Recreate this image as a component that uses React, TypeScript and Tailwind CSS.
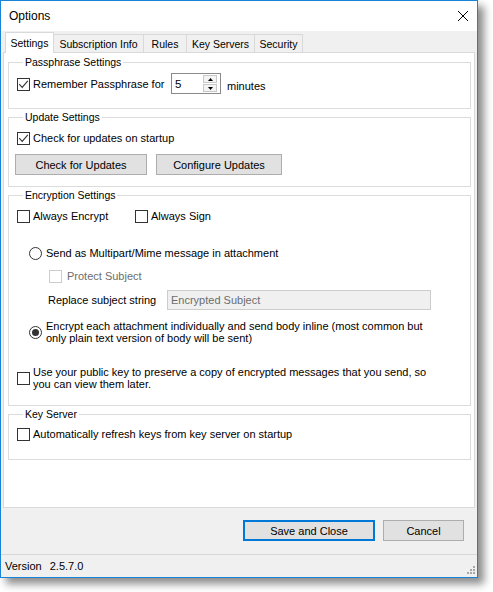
import React from "react";

function Check({ checked = false, disabled = false }: { checked?: boolean; disabled?: boolean }) {
  return (
    <span
      className={
        disabled
          ? "w-[13px] h-[13px] shrink-0 border border-[#cccccc] bg-white flex items-center justify-center"
          : "w-[13px] h-[13px] shrink-0 border border-[#333333] bg-white flex items-center justify-center"
      }
    >
      {checked && (
        <svg width="11" height="11" viewBox="0 0 11 11">
          <path d="M1.2 5.2 L4.2 8.4 L9.8 1.8" fill="none" stroke="#333333" strokeWidth="1.1" />
        </svg>
      )}
    </span>
  );
}

function Radio({ checked = false }: { checked?: boolean }) {
  return (
    <span className="w-[13px] h-[13px] shrink-0 rounded-full border border-[#333333] bg-white flex items-center justify-center">
      {checked && <span className="w-[7px] h-[7px] rounded-full bg-[#333333]" />}
    </span>
  );
}

function Group({ title, children, className }: { title: string; children: React.ReactNode; className?: string }) {
  return (
    <fieldset className={"border border-[#dcdcdc] pl-[8px] " + (className ?? "")}>
      <legend className="ml-[6px] px-[2px] text-[10.5px] leading-[14px]">{title}</legend>
      {children}
    </fieldset>
  );
}

export default function App() {
  return (
    <div className="w-[493px] h-[592px] bg-white font-['Liberation_Sans',Arial,sans-serif] text-[11px] leading-[14px] text-black">
      <div className="w-[478px] h-[578px] border border-[#1883d7] bg-[#f0f0f0] flex flex-col shadow-[6px_6px_8px_rgba(0,0,0,0.45)]">
        {/* Title bar */}
        <div className="h-[30px] shrink-0 bg-white flex items-center justify-between pl-[8px] pr-[9px]">
          <span className="text-[12px] leading-[16px]">Options</span>
          <svg width="10" height="10" viewBox="0 0 10 10">
            <path d="M0 0 L10 10 M10 0 L0 10" stroke="#000" strokeWidth="1" />
          </svg>
        </div>

        {/* Tab control */}
        <div className="px-[2px] shrink-0">
          <div className="h-[21px] flex items-end pl-[2px] text-[10.5px]">
            <div className="relative z-10 -mb-px w-[49px] h-[21px] bg-white border-l border-t border-r border-[#d9d9d9] flex items-center justify-center pb-[1px]">
              Settings
            </div>
            <div className="w-[90px] h-[18px] border-t border-r border-[#d9d9d9] flex items-center justify-center">
              Subscription Info
            </div>
            <div className="w-[43px] h-[18px] border-t border-r border-[#d9d9d9] flex items-center justify-center">
              Rules
            </div>
            <div className="w-[68px] h-[18px] border-t border-r border-[#d9d9d9] flex items-center justify-center">
              Key Servers
            </div>
            <div className="w-[48px] h-[18px] border-t border-r border-[#d9d9d9] flex items-center justify-center">
              Security
            </div>
          </div>

          <div className="h-[456px] border border-[#d9d9d9] bg-white pt-[2px] pl-[4px] pr-[3px]">
            {/* Passphrase Settings */}
            <Group title="Passphrase Settings" className="pb-[14px]">
              <div className="mt-[5px] h-[20px] flex items-center">
                <Check checked />
                <span className="ml-[3px] w-[138px]">Remember Passphrase for</span>
                <div className="w-[50px] h-[21px] -mt-[1px] border border-[#8a8a8a] bg-white flex items-center">
                  <span className="flex-1 pl-[3px] text-[11.5px]">5</span>
                  <div className="w-[14px] h-[17px] flex flex-col gap-px mr-[3px]">
                    <div className="flex-1 border border-[#c8c8c8] bg-[#f4f4f4] flex items-center justify-center">
                      <svg width="5" height="3" viewBox="0 0 5 3">
                        <path d="M2.5 0 L5 3 L0 3 Z" fill="#000" />
                      </svg>
                    </div>
                    <div className="flex-1 border border-[#c8c8c8] bg-[#f4f4f4] flex items-center justify-center">
                      <svg width="5" height="3" viewBox="0 0 5 3">
                        <path d="M0 0 L5 0 L2.5 3 Z" fill="#000" />
                      </svg>
                    </div>
                  </div>
                </div>
                <span className="ml-[6px] pt-[4px]">minutes</span>
              </div>
            </Group>

            {/* Update Settings */}
            <Group title="Update Settings" className="mt-[1px] pb-[11px]">
              <div className="mt-[6px] h-[16px] flex items-center">
                <Check checked />
                <span className="ml-[3px]">Check for updates on startup</span>
              </div>
              <div className="mt-[8px] -ml-[2px] flex gap-[9px]">
                <button className="w-[132px] h-[21px] border border-[#adadad] bg-[#e1e1e1] text-[11px] leading-[14px]">
                  Check for Updates
                </button>
                <button className="w-[126px] h-[21px] border border-[#adadad] bg-[#e1e1e1] text-[11px] leading-[14px]">
                  Configure Updates
                </button>
              </div>
            </Group>

            {/* Encryption Settings */}
            <Group title="Encryption Settings" className="mt-[1px] pb-[15px]">
              <div className="mt-[6px] h-[16px] flex items-center">
                <div className="w-[118px] flex items-center">
                  <Check />
                  <span className="ml-[3px]">Always Encrypt</span>
                </div>
                <Check />
                <span className="ml-[3px]">Always Sign</span>
              </div>

              <div className="mt-[21px] h-[16px] ml-[12px] flex items-center">
                <Radio />
                <span className="ml-[4px]">Send as Multipart/Mime message in attachment</span>
              </div>

              <div className="mt-[7px] h-[16px] ml-[32px] flex items-center text-[#6d6d6d]">
                <Check disabled />
                <span className="ml-[5px]">Protect Subject</span>
              </div>

              <div className="mt-[6px] h-[20px] ml-[31px] flex items-center">
                <span className="w-[119px]">Replace subject string</span>
                <div className="w-[264px] h-[20px] border border-[#cccccc] bg-[#f0f0f0] text-[#6d6d6d] pl-[3px] flex items-center">
                  Encrypted Subject
                </div>
              </div>

              <div className="mt-[10px] h-[24px] ml-[12px] flex items-center">
                <Radio checked />
                <span className="ml-[4px] leading-[12px]">
                  Encrypt each attachment individually and send body inline (most common but
                  <br />
                  only plain text version of body will be sent)
                </span>
              </div>

              <div className="mt-[22px] h-[24px] flex items-center">
                <Check />
                <span className="ml-[3px] leading-[12px]">
                  Use your public key to preserve a copy of encrypted messages that you send, so
                  <br />
                  you can view them later.
                </span>
              </div>
            </Group>

            {/* Key Server */}
            <Group title="Key Server" className="mt-[1px] pb-[17px]">
              <div className="mt-[5px] h-[16px] flex items-center">
                <Check />
                <span className="ml-[3px]">Automatically refresh keys from key server on startup</span>
              </div>
            </Group>
          </div>
        </div>

        {/* Buttons */}
        <div className="h-[46px] shrink-0 flex items-start justify-end pt-[12px] pr-[13px] gap-[8px]">
          <button className="w-[132px] h-[21px] border-2 border-[#0078d7] bg-[#e1e1e1] text-[11px] leading-[14px]">
            Save and Close
          </button>
          <button className="w-[81px] h-[21px] border border-[#adadad] bg-[#e1e1e1] text-[11px] leading-[14px]">
            Cancel
          </button>
        </div>

        {/* Status bar */}
        <div className="flex-1 border-t border-[#d7d7d7] flex items-center justify-between pl-[4px] pr-[1px]">
          <div className="flex items-center">
            <span>Version</span>
            <span className="ml-[8px]">2.5.7.0</span>
          </div>
          <svg width="9" height="9" viewBox="0 0 9 9" className="self-end mb-[2px]">
            <rect x="6" y="0" width="2" height="2" fill="#a8a8a8" />
            <rect x="3" y="3" width="2" height="2" fill="#a8a8a8" />
            <rect x="6" y="3" width="2" height="2" fill="#a8a8a8" />
            <rect x="0" y="6" width="2" height="2" fill="#a8a8a8" />
            <rect x="3" y="6" width="2" height="2" fill="#a8a8a8" />
            <rect x="6" y="6" width="2" height="2" fill="#a8a8a8" />
          </svg>
        </div>
      </div>
    </div>
  );
}
